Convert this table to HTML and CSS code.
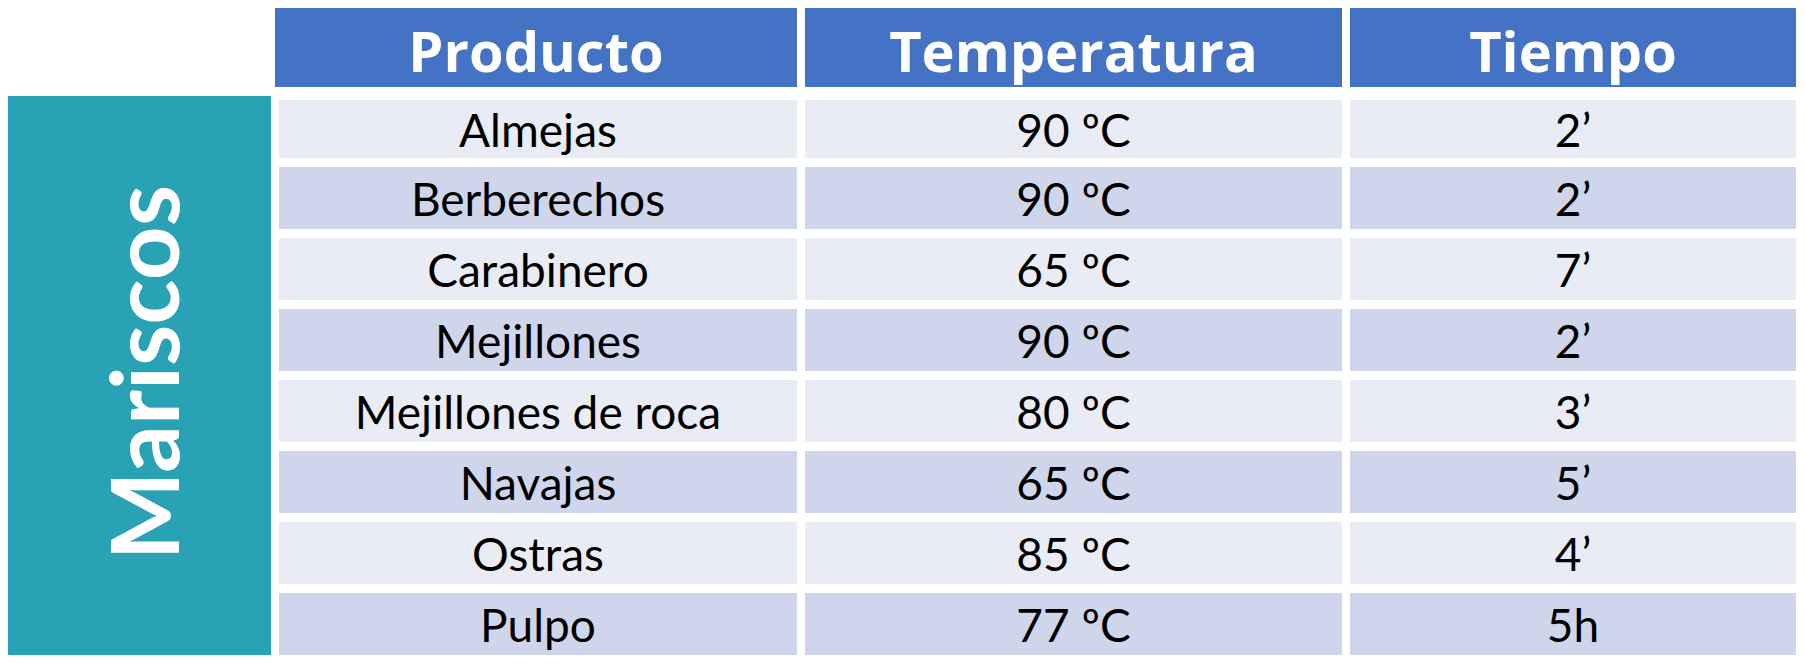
FILE: index.html
```html
<!DOCTYPE html>
<html lang="es">
<head>
  <meta charset="UTF-8">
  <title>Mariscos</title>
  <link rel="stylesheet" href="styles.css">
</head>
<body>
  <div class="tabla">
    <div class="vacio"></div>
    <div class="cab cab-primera">Producto</div>
    <div class="cab">Temperatura</div>
    <div class="cab">Tiempo</div>

    <div class="grupo"><span>Mariscos</span></div>

    <div class="celda clara primera">Almejas</div>
    <div class="celda clara primera">90 ºC</div>
    <div class="celda clara primera">2’</div>

    <div class="celda oscura">Berberechos</div>
    <div class="celda oscura">90 ºC</div>
    <div class="celda oscura">2’</div>

    <div class="celda clara">Carabinero</div>
    <div class="celda clara">65 ºC</div>
    <div class="celda clara">7’</div>

    <div class="celda oscura">Mejillones</div>
    <div class="celda oscura">90 ºC</div>
    <div class="celda oscura">2’</div>

    <div class="celda clara">Mejillones de roca</div>
    <div class="celda clara">80 ºC</div>
    <div class="celda clara">3’</div>

    <div class="celda oscura">Navajas</div>
    <div class="celda oscura">65 ºC</div>
    <div class="celda oscura">5’</div>

    <div class="celda clara">Ostras</div>
    <div class="celda clara">85 ºC</div>
    <div class="celda clara">4’</div>

    <div class="celda oscura">Pulpo</div>
    <div class="celda oscura">77 ºC</div>
    <div class="celda oscura">5h</div>
  </div>
</body>
</html>
```

FILE: styles.css
```css
body {
  margin: 0;
  background-color: #ffffff;
  font-family: 'Lato', 'Open Sans', sans-serif;
  color: #000000;
}

.tabla {
  display: grid;
  grid-template-columns: 263px 518px 537px 446px;
  grid-template-rows: 79px repeat(8, 62px);
  column-gap: 8px;
  row-gap: 9px;
  padding: 8px;
}

.cab {
  background-color: #4472c4;
  color: #ffffff;
  font-family: 'Open Sans', 'Lato', sans-serif;
  font-weight: bold;
  font-size: 56px;
  display: flex;
  justify-content: center;
  align-items: center;
  padding-top: 4px;
}

.cab-primera {
  margin-left: -4px;
}

.grupo {
  grid-column: 1;
  grid-row: 2 / span 8;
  background-color: #29a2b5;
  display: flex;
  justify-content: center;
  align-items: center;
}

.grupo span {
  writing-mode: vertical-rl;
  transform: rotate(180deg);
  color: #ffffff;
  font-weight: bold;
  font-size: 94px;
  margin-left: 6px;
  margin-bottom: 6px;
}

.celda {
  font-size: 46px;
  display: flex;
  justify-content: center;
  align-items: center;
}

.celda.primera {
  margin-top: 4px;
}

.clara {
  background-color: #e9ebf5;
}

.oscura {
  background-color: #cfd5ea;
}
```
